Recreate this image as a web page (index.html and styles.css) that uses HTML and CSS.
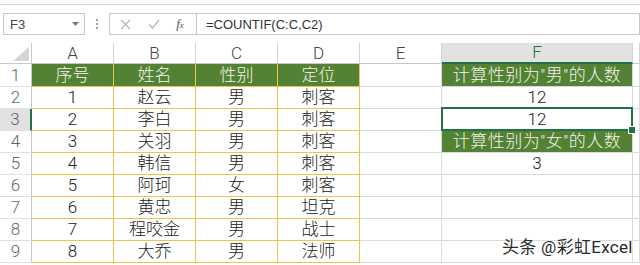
FILE: index.html
```html
<!DOCTYPE html>
<html lang="zh-CN">
<head>
  <meta charset="UTF-8" />
  <title>COUNTIF 统计性别</title>
  <link rel="stylesheet" href="styles.css">
</head>
<body>
  <div class="ribbon"></div>

  <div class="formula-bar">
    <div class="name-box">
      <span>F3</span>
      <svg class="caret" width="7" height="4" viewBox="0 0 7 4"><path d="M0 0h7L3.5 4z" fill="#777"/></svg>
    </div>
    <div class="grip"><i></i><i></i><i></i></div>
    <div class="fx-buttons">
      <svg width="11" height="11" viewBox="0 0 11 11"><path d="M1 1l9 9M10 1l-9 9" stroke="#b5b5b5" stroke-width="1.2"/></svg>
      <svg width="12" height="10" viewBox="0 0 12 10"><path d="M1 5.5l3.5 3.5L11 1" stroke="#b5b5b5" stroke-width="1.2" fill="none"/></svg>
      <span class="fx">f<small>x</small></span>
    </div>
    <div class="formula">=COUNTIF(C:C,C2)</div>
  </div>

  <div class="sheet">
    <!-- column headers -->
    <div class="corner"><svg width="16" height="14" viewBox="0 0 16 14"><path d="M16 0V14H0z" fill="#d6d6d6"/></svg></div>
    <div class="col-head">A</div>
    <div class="col-head">B</div>
    <div class="col-head">C</div>
    <div class="col-head">D</div>
    <div class="col-head">E</div>
    <div class="col-head active">F</div>
    <div class="col-head"></div>

    <div class="row-head">1</div>
    <div class="cell t head">序号</div>
    <div class="cell t head">姓名</div>
    <div class="cell t head">性别</div>
    <div class="cell t head">定位</div>
    <div class="cell"></div>
    <div class="cell green">计算性别为"男"的人数</div>
    <div class="cell"></div>

    <div class="row-head">2</div>
    <div class="cell t">1</div>
    <div class="cell t">赵云</div>
    <div class="cell t">男</div>
    <div class="cell t">刺客</div>
    <div class="cell"></div>
    <div class="cell">12</div>
    <div class="cell"></div>

    <div class="row-head active">3</div>
    <div class="cell t">2</div>
    <div class="cell t">李白</div>
    <div class="cell t">男</div>
    <div class="cell t">刺客</div>
    <div class="cell"></div>
    <div class="cell selected">12</div>
    <div class="cell"></div>

    <div class="row-head">4</div>
    <div class="cell t">3</div>
    <div class="cell t">关羽</div>
    <div class="cell t">男</div>
    <div class="cell t">刺客</div>
    <div class="cell"></div>
    <div class="cell green">计算性别为"女"的人数</div>
    <div class="cell"></div>

    <div class="row-head">5</div>
    <div class="cell t">4</div>
    <div class="cell t">韩信</div>
    <div class="cell t">男</div>
    <div class="cell t">刺客</div>
    <div class="cell"></div>
    <div class="cell">3</div>
    <div class="cell"></div>

    <div class="row-head">6</div>
    <div class="cell t">5</div>
    <div class="cell t">阿珂</div>
    <div class="cell t">女</div>
    <div class="cell t">刺客</div>
    <div class="cell"></div>
    <div class="cell"></div>
    <div class="cell"></div>

    <div class="row-head">7</div>
    <div class="cell t">6</div>
    <div class="cell t">黄忠</div>
    <div class="cell t">男</div>
    <div class="cell t">坦克</div>
    <div class="cell"></div>
    <div class="cell"></div>
    <div class="cell"></div>

    <div class="row-head">8</div>
    <div class="cell t">7</div>
    <div class="cell t">程咬金</div>
    <div class="cell t">男</div>
    <div class="cell t">战士</div>
    <div class="cell"></div>
    <div class="cell"></div>
    <div class="cell"></div>

    <div class="row-head">9</div>
    <div class="cell t">8</div>
    <div class="cell t">大乔</div>
    <div class="cell t">男</div>
    <div class="cell t">法师</div>
    <div class="cell"></div>
    <div class="cell"></div>
    <div class="cell"></div>
  </div>

  <div class="watermark">头条 @彩虹Excel</div>
</body>
</html>
```

FILE: styles.css
```css
* { box-sizing: border-box; }
body {
  margin: 0;
  width: 640px;
  height: 265px;
  overflow: hidden;
  background: #fff;
  position: relative;
  font-family: Roboto, "Noto Sans CJK SC", sans-serif;
}
.ribbon {
  height: 5px;
  background: #fafafa;
  border-bottom: 1px solid #d6d6d6;
}
.formula-bar {
  display: flex;
  align-items: stretch;
  height: 22px;
  margin-top: 8px;
  margin-bottom: 8px;
  font-family: "Liberation Sans", "Noto Sans", sans-serif;
  font-size: 13px;
  color: #444;
}
.name-box {
  width: 82px;
  margin-left: 3px;
  border: 1px solid #c8c8c8;
  display: flex;
  align-items: center;
  justify-content: space-between;
  padding: 0 5px 0 6px;
}
.grip {
  width: 24px;
  display: flex;
  flex-direction: column;
  align-items: center;
  justify-content: center;
  gap: 2px;
}
.grip i { width: 2px; height: 2px; background: #a8a8a8; }
.fx-buttons {
  width: 88px;
  border: 1px solid #c8c8c8;
  display: flex;
  align-items: center;
  justify-content: space-around;
  padding: 0 4px 0 2px;
}
.fx {
  font-family: "Liberation Serif", serif;
  font-style: italic;
  font-size: 13px;
  color: #555;
}
.fx small { font-size: 9px; }
.formula {
  flex: 1;
  border: 1px solid #c8c8c8;
  border-left: none;
  display: flex;
  align-items: center;
  padding-left: 9px;
  color: #333;
}
.sheet {
  display: grid;
  grid-template-columns: 32px repeat(5, 82px) 191px 1fr;
  grid-template-rows: 21px 23px repeat(8, 22px);
  font-size: 17px;
  font-weight: 300;
  color: #222;
}
.sheet > div {
  border-right: 1px solid #dadada;
  border-bottom: 1px solid #dadada;
  display: flex;
  align-items: center;
  justify-content: center;
  line-height: 1;
  white-space: nowrap;
}
.corner {
  justify-content: flex-end !important;
  align-items: flex-end !important;
  padding: 0 2px 2px 0;
  border-color: #c8c8c8 !important;
}
.col-head {
  color: #444;
  border-right-color: #d4d4d4 !important;
  border-bottom-color: #c8c8c8 !important;
}
.col-head.active {
  background: #e1e1e1;
  color: #2b6e45;
  border-bottom: 2px solid #217346 !important;
}
.row-head {
  color: #666;
  border-right-color: #c8c8c8 !important;
  border-bottom-color: #e0e0e0 !important;
}
.row-head.active {
  background: #e1e1e1;
  border-right: 2px solid #217346 !important;
}
.sheet > .t {
  border-right-color: #f3c24e;
  border-bottom-color: #f3c24e;
}
.head, .green {
  background: #548235;
  color: #f4f4ea;
}
.green { letter-spacing: 0.5px; }
.selected { position: relative; }
.selected::after {
  content: "";
  position: absolute;
  top: -2px;
  left: -1px;
  right: -1px;
  bottom: -1px;
  border: 2px solid #217346;
}
.selected::before {
  content: "";
  position: absolute;
  right: -4px;
  bottom: -4px;
  width: 6px;
  height: 6px;
  background: #217346;
  border: 1px solid #fff;
  z-index: 1;
}
.watermark {
  position: absolute;
  left: 502px;
  top: 237px;
  font-size: 17px;
  letter-spacing: 0.3px;
  color: #2a2a2a;
  text-shadow: 0 0 2px #fff, 0 0 2px #fff, 0 0 3px #fff;
  line-height: 20px;
  white-space: nowrap;
}
```
